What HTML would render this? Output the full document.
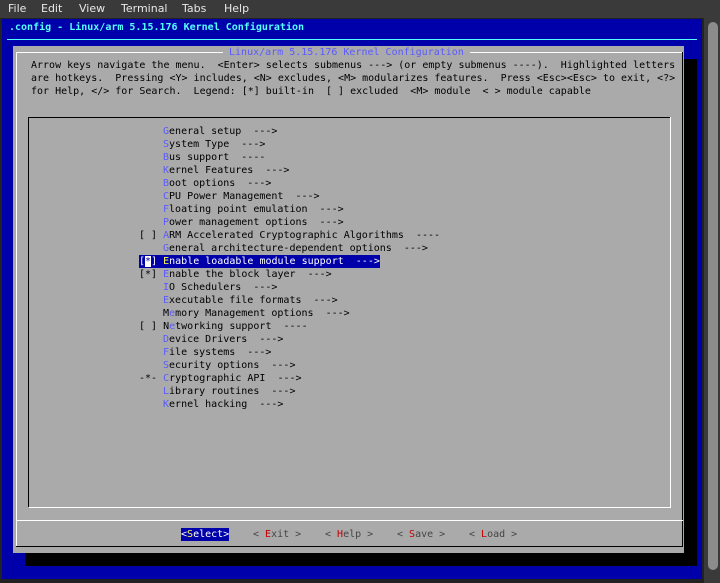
<!DOCTYPE html>
<html><head><meta charset="utf-8"><style>
*{margin:0;padding:0}
body{width:720px;height:583px;background:#333;position:relative;overflow:hidden;font-family:"DejaVu Sans Mono","Liberation Mono",monospace;font-size:10px}
.a{position:absolute}
.t{position:absolute;white-space:pre;line-height:13px;height:13px;color:#000;margin-top:1px}
.h{color:#5a5aff}
.mb{position:absolute;top:0;left:0;width:720px;height:18px;background:#3a3a3a;font-family:"DejaVu Sans","Liberation Sans",sans-serif;font-size:11px;color:#e8e8e8}
.mb span{position:absolute;top:2px}
</style></head><body>
<div class="mb"><span style="left:8px">File</span><span style="left:41px">Edit</span><span style="left:79px">View</span><span style="left:121px">Terminal</span><span style="left:182px">Tabs</span><span style="left:224px">Help</span></div>
<div class="a" style="left:0;top:18px;width:704px;height:565px;background:#222"></div>
<div class="a" style="left:2px;top:19px;width:700px;height:560px;background:#0000aa"></div>
<div class="a" style="left:704px;top:18px;width:16px;height:565px;background:#3a3a3a"></div>
<div class="a" style="left:708px;top:22px;width:10px;height:548px;background:#8c8c8c;border-radius:5px"></div>
<div class="t" style="left:9px;top:20px;color:#55ffff;font-weight:bold">.config - Linux/arm 5.15.176 Kernel Configuration</div>
<div class="a" style="left:7px;top:39px;width:690px;height:1px;background:#55ffff"></div>
<div class="a" style="left:25px;top:59px;width:672px;height:507px;background:#000"></div>
<div class="a" style="left:13px;top:46px;width:671px;height:507px;background:#aaa"></div>
<div class="a" style="left:16px;top:52px;width:667px;height:1px;background:#fff"></div>
<div class="a" style="left:16px;top:52px;width:1px;height:495px;background:#fff"></div>
<div class="a" style="left:682px;top:52px;width:1px;height:495px;background:#000"></div>
<div class="a" style="left:16px;top:546px;width:667px;height:1px;background:#000"></div>
<div class="a" style="left:16px;top:520px;width:667px;height:1px;background:#fff"></div>
<div class="t" style="left:223px;top:45px;background:#aaa;color:#5a5aff"> Linux/arm 5.15.176 Kernel Configuration </div>
<div class="t" style="left:31px;top:58px">Arrow keys navigate the menu.  &lt;Enter&gt; selects submenus ---&gt; (or empty submenus ----).  Highlighted letters</div>
<div class="t" style="left:31px;top:71px">are hotkeys.  Pressing &lt;Y&gt; includes, &lt;N&gt; excludes, &lt;M&gt; modularizes features.  Press &lt;Esc&gt;&lt;Esc&gt; to exit, &lt;?&gt;</div>
<div class="t" style="left:31px;top:84px">for Help, &lt;/&gt; for Search.  Legend: [*] built-in  [ ] excluded  &lt;M&gt; module  &lt; &gt; module capable</div>
<div class="a" style="left:28px;top:117px;width:642px;height:1px;background:#000"></div>
<div class="a" style="left:28px;top:117px;width:1px;height:390px;background:#000"></div>
<div class="a" style="left:670px;top:117px;width:1px;height:391px;background:#fff"></div>
<div class="a" style="left:29px;top:507px;width:642px;height:1px;background:#fff"></div>
<div class="t" style="left:163px;top:124px"><span class="h">G</span>eneral setup  ---&gt;</div>
<div class="t" style="left:163px;top:137px"><span class="h">S</span>ystem Type  ---&gt;</div>
<div class="t" style="left:163px;top:150px"><span class="h">B</span>us support  ----</div>
<div class="t" style="left:163px;top:163px"><span class="h">K</span>ernel Features  ---&gt;</div>
<div class="t" style="left:163px;top:176px"><span class="h">B</span>oot options  ---&gt;</div>
<div class="t" style="left:163px;top:189px"><span class="h">C</span>PU Power Management  ---&gt;</div>
<div class="t" style="left:163px;top:202px"><span class="h">F</span>loating point emulation  ---&gt;</div>
<div class="t" style="left:163px;top:215px"><span class="h">P</span>ower management options  ---&gt;</div>
<div class="t" style="left:139px;top:228px">[ ] <span class="h">A</span>RM Accelerated Cryptographic Algorithms  ----</div>
<div class="t" style="left:163px;top:241px"><span class="h">G</span>eneral architecture-dependent options  ---&gt;</div>
<div class="t" style="left:139px;top:254px;background:#0000aa;color:#fff">[<span style="background:#fff;color:#0000aa">*</span>] <span style="color:#ffff55">E</span>nable loadable module support  ---&gt;</div>
<div class="t" style="left:139px;top:267px">[*] <span class="h">E</span>nable the block layer  ---&gt;</div>
<div class="t" style="left:163px;top:280px"><span class="h">I</span>O Schedulers  ---&gt;</div>
<div class="t" style="left:163px;top:293px"><span class="h">E</span>xecutable file formats  ---&gt;</div>
<div class="t" style="left:163px;top:306px">M<span class="h">e</span>mory Management options  ---&gt;</div>
<div class="t" style="left:139px;top:319px">[ ] N<span class="h">e</span>tworking support  ----</div>
<div class="t" style="left:163px;top:332px"><span class="h">D</span>evice Drivers  ---&gt;</div>
<div class="t" style="left:163px;top:345px"><span class="h">F</span>ile systems  ---&gt;</div>
<div class="t" style="left:163px;top:358px"><span class="h">S</span>ecurity options  ---&gt;</div>
<div class="t" style="left:139px;top:371px">-*- <span class="h">C</span>ryptographic API  ---&gt;</div>
<div class="t" style="left:163px;top:384px"><span class="h">L</span>ibrary routines  ---&gt;</div>
<div class="t" style="left:163px;top:397px"><span class="h">K</span>ernel hacking  ---&gt;</div>
<div class="t" style="left:181px;top:527px;background:#0000aa;color:#fff">&lt;<span style="color:#ffff55">S</span>elect&gt;</div>
<div class="t" style="left:253px;top:527px;color:#444">&lt; <span style="color:#c00000">E</span>xit &gt;</div>
<div class="t" style="left:325px;top:527px;color:#444">&lt; <span style="color:#c00000">H</span>elp &gt;</div>
<div class="t" style="left:397px;top:527px;color:#444">&lt; <span style="color:#c00000">S</span>ave &gt;</div>
<div class="t" style="left:469px;top:527px;color:#444">&lt; <span style="color:#c00000">L</span>oad &gt;</div>
</body></html>
